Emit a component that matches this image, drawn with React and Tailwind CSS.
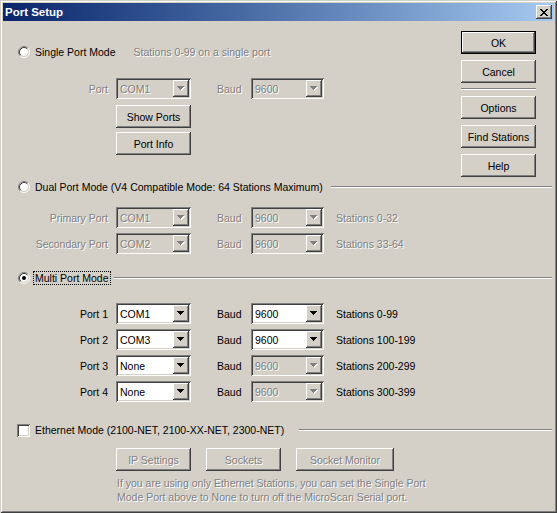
import React from 'react';

const raised =
  'shadow-[inset_-1px_-1px_#404040,inset_1px_1px_#ffffff,inset_-2px_-2px_#808080,inset_2px_2px_#d4d0c8]';
const sunken =
  'shadow-[inset_1px_1px_#808080,inset_-1px_-1px_#ffffff,inset_2px_2px_#404040,inset_-2px_-2px_#d4d0c8]';
const dim = 'text-[#808080] [text-shadow:1px_1px_0_#ffffff]';

const Radio = ({ checked }) => (
  <svg width="12" height="12" viewBox="0 0 12 12" className="shrink-0">
    <circle cx="6" cy="6" r="4" fill="#ffffff" />
    <path d="M2.11 9.89 A5.5 5.5 0 0 1 9.89 2.11" fill="none" stroke="#808080" />
    <path d="M9.89 2.11 A5.5 5.5 0 0 1 2.11 9.89" fill="none" stroke="#ffffff" />
    <path d="M2.82 9.18 A4.5 4.5 0 0 1 9.18 2.82" fill="none" stroke="#404040" />
    <path d="M9.18 2.82 A4.5 4.5 0 0 1 2.82 9.18" fill="none" stroke="#d4d0c8" />
    {checked && <circle cx="6" cy="6" r="2" fill="#000000" />}
  </svg>
);

const Arrow = ({ enabled }) => (
  <svg width="8" height="5" viewBox="0 0 8 5" shapeRendering="crispEdges">
    {!enabled && <polygon points="1,1 8,1 4.5,5" fill="#ffffff" />}
    <polygon points="0,0 7,0 3.5,4" fill={enabled ? '#000000' : '#808080'} />
  </svg>
);

const Combo = ({ value, enabled, w }) => (
  <div className={`${w} h-[21px] flex items-center p-[2px] ${sunken} ${enabled ? 'bg-white' : 'bg-[#d4d0c8]'}`}>
    <span className={`flex-1 pl-[2px] ${enabled ? 'text-black' : dim}`}>{value}</span>
    <div className={`w-[16px] h-[17px] flex items-center justify-center bg-[#d4d0c8] ${raised}`}>
      <Arrow enabled={enabled} />
    </div>
  </div>
);

const Btn = ({ children, disabled, isDefault, w = 'w-[75px]' }) => (
  <div
    className={`${w} h-[23px] flex items-center justify-center bg-[#d4d0c8] ${
      isDefault
        ? 'shadow-[inset_0_0_0_1px_#000000,inset_-2px_-2px_#404040,inset_2px_2px_#ffffff,inset_-3px_-3px_#808080]'
        : raised
    } ${disabled ? dim : 'text-black'}`}
  >
    {children}
  </div>
);

const Groove = ({ ml }) => (
  <div className={`flex-1 h-[2px] ${ml} mr-[2px] border-t border-b border-t-[#808080] border-b-white`} />
);

const ModeRow = ({ mt, label, checked, focus, line, lineMl, children }) => (
  <div className={`flex items-center h-[14px] ${mt}`}>
    <div className="ml-[15px]">
      <Radio checked={checked} />
    </div>
    <span
      className={`ml-[3px] px-[1px] leading-[12px] border border-dotted ${
        focus ? 'border-black' : 'border-transparent'
      }`}
    >
      {label}
    </span>
    {children}
    {line && <Groove ml={lineMl} />}
  </div>
);

const PortRow = ({ mt, label, port, baud, stations, labelOn, portOn, baudOn }) => (
  <div className={`flex items-center h-[21px] ${mt}`}>
    <span className={`w-[105px] text-right ${labelOn ? 'text-black' : dim}`}>{label}</span>
    <div className="ml-[8px]">
      <Combo value={port} enabled={portOn} w="w-[75px]" />
    </div>
    <span className={`ml-[26px] w-[34px] ${labelOn ? 'text-black' : dim}`}>Baud</span>
    <Combo value={baud} enabled={baudOn} w="w-[73px]" />
    {stations && <span className={`ml-[12px] ${labelOn ? 'text-black' : dim}`}>{stations}</span>}
  </div>
);

export default function App() {
  return (
    <div className="w-[557px] h-[513px] p-[3px] flex flex-col bg-[#d4d0c8] shadow-[inset_1px_1px_#d4d0c8,inset_-1px_-1px_#404040,inset_2px_2px_#ffffff,inset_-2px_-2px_#808080] font-['Liberation_Sans',Arial,sans-serif] text-[10.5px] leading-[14px] text-black">
      <div className="h-[18px] shrink-0 flex items-center pl-[2px] pr-[2px] bg-gradient-to-r from-[#0a246a] to-[#a6caf0]">
        <span className="font-bold text-white text-[11.5px]">Port Setup</span>
        <div className={`ml-auto w-[16px] h-[14px] flex items-center justify-center bg-[#d4d0c8] ${raised}`}>
          <svg width="8" height="7" viewBox="0 0 8 7" shapeRendering="crispEdges">
            <path d="M0 0h2v1h-2zM6 0h2v1h-2zM1 1h2v1h-2zM5 1h2v1h-2zM2 2h4v1h-4zM3 3h2v1h-2zM2 4h4v1h-4zM1 5h2v1h-2zM5 5h2v1h-2zM0 6h2v1h-2zM6 6h2v1h-2z" fill="#000000" />
          </svg>
        </div>
      </div>

      <div className="flex-1 flex flex-col">
        <div className="flex">
          <div className="flex-1 flex flex-col">
            <ModeRow mt="mt-[24px]" label="Single Port Mode">
              <span className={`ml-[16px] ${dim}`}>Stations 0-99 on a single port</span>
            </ModeRow>
            <PortRow mt="mt-[19px]" label="Port" port="COM1" baud="9600" />
            <div className="ml-[113px] mt-[6px]">
              <Btn>Show Ports</Btn>
            </div>
            <div className="ml-[113px] mt-[4px]">
              <Btn>Port Info</Btn>
            </div>
          </div>
          <div className="w-[75px] mr-[18px] pt-[10px] flex flex-col">
            <Btn isDefault>OK</Btn>
            <div className="mt-[6px]">
              <Btn>Cancel</Btn>
            </div>
            <div className="mt-[5px] h-[2px] border-t border-b border-t-[#808080] border-b-white" />
            <div className="mt-[6px]">
              <Btn>Options</Btn>
            </div>
            <div className="mt-[6px]">
              <Btn>Find Stations</Btn>
            </div>
            <div className="mt-[6px]">
              <Btn>Help</Btn>
            </div>
          </div>
        </div>

        <ModeRow
          mt="mt-[3px]"
          label="Dual Port Mode (V4 Compatible Mode: 64 Stations Maximum)"
          line
          lineMl="ml-[6px]"
        />
        <PortRow mt="mt-[13px]" label="Primary Port" port="COM1" baud="9600" stations="Stations 0-32" />
        <PortRow mt="mt-[5px]" label="Secondary Port" port="COM2" baud="9600" stations="Stations 33-64" />

        <ModeRow mt="mt-[17px]" label="Multi Port Mode" checked focus line lineMl="ml-[3px]" />
        <PortRow mt="mt-[18px]" label="Port 1" port="COM1" baud="9600" stations="Stations 0-99" labelOn portOn baudOn />
        <PortRow mt="mt-[5px]" label="Port 2" port="COM3" baud="9600" stations="Stations 100-199" labelOn portOn baudOn />
        <PortRow mt="mt-[5px]" label="Port 3" port="None" baud="9600" stations="Stations 200-299" labelOn portOn />
        <PortRow mt="mt-[5px]" label="Port 4" port="None" baud="9600" stations="Stations 300-399" labelOn portOn />

        <div className="flex items-center h-[14px] mt-[21px]">
          <div className={`ml-[14px] w-[13px] h-[13px] shrink-0 bg-white ${sunken}`} />
          <span className="ml-[3px] px-[1px] leading-[12px] border border-transparent">
            Ethernet Mode (2100-NET, 2100-XX-NET, 2300-NET)
          </span>
          <Groove ml="ml-[13px]" />
        </div>
        <div className="ml-[113px] mt-[11px] flex gap-[15px]">
          <Btn disabled>IP Settings</Btn>
          <Btn disabled>Sockets</Btn>
          <Btn disabled w="w-[98px]">Socket Monitor</Btn>
        </div>
        <div className={`ml-[114px] mt-[5px] ${dim}`}>
          <div>If you are using only Ethernet Stations, you can set the Single Port</div>
          <div>Mode Port above to None to turn off the MicroScan Serial port.</div>
        </div>
      </div>
    </div>
  );
}
